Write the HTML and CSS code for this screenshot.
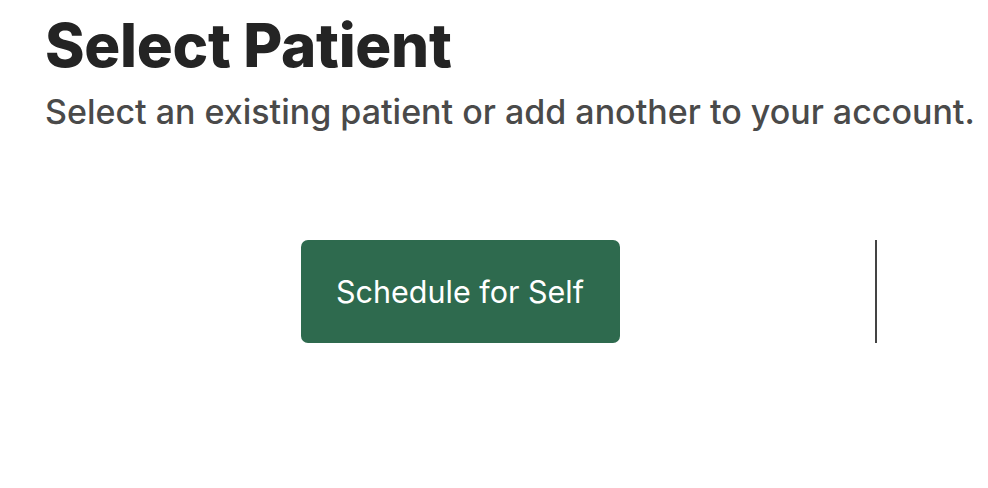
FILE: index.html
```html
<!DOCTYPE html>
<html lang="en">
<head>
<meta charset="utf-8">
<title>Select Patient</title>
<link rel="stylesheet" href="styles.css">
</head>
<body>
<main class="page">
  <header class="intro">
    <h1 class="title">Select Patient</h1>
    <p class="subtitle">Select an existing patient or add another to your account.</p>
  </header>
  <section class="choices">
    <div class="choice choice-self">
      <button class="btn-primary" type="button">Schedule for Self</button>
    </div>
    <div class="choice choice-other"></div>
  </section>
</main>
</body>
</html>
```

FILE: styles.css
```css
html, body {
  margin: 0;
  padding: 0;
  background: #ffffff;
}
body {
  font-family: Inter, "Noto Sans", "Liberation Sans", sans-serif;
  overflow: hidden;
}
.page {
  padding: 12px 0 0 45px;
}
.intro {
  display: flex;
  flex-direction: column;
}
.title {
  margin: 0;
  font-size: 60px;
  line-height: 66px;
  font-weight: 800;
  color: #242424;
  letter-spacing: -0.3px;
}
.subtitle {
  margin: 14px 0 0 0;
  font-size: 34px;
  line-height: 40px;
  font-weight: 500;
  color: #4a4a4a;
  white-space: nowrap;
}
.choices {
  display: flex;
  margin-top: 108px;
  width: 943px;
}
.choice {
  display: flex;
  justify-content: center;
  align-items: center;
  height: 103px;
}
.choice-self {
  width: 830px;
}
.choice-other {
  flex: 1;
  border-left: 2px solid #444444;
}
.btn-primary {
  width: 319px;
  height: 103px;
  border: none;
  border-radius: 7px;
  background: #2e6a4e;
  color: #ffffff;
  font-family: Inter, "Noto Sans", "Liberation Sans", sans-serif;
  font-size: 30.5px;
  cursor: pointer;
}
```
